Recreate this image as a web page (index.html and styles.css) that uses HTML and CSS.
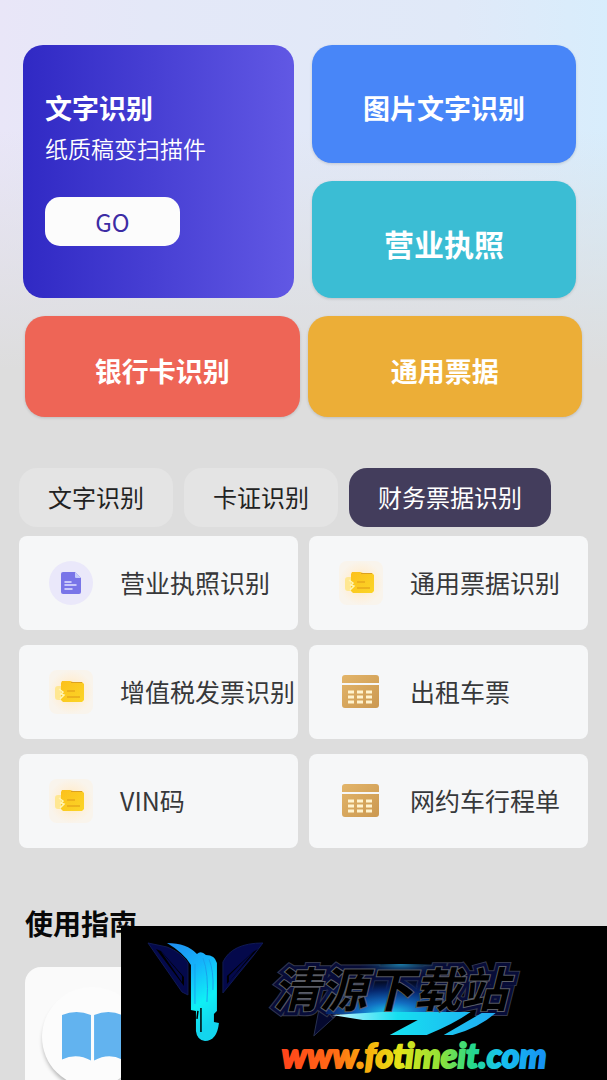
FILE: index.html
```html
<!DOCTYPE html>
<html lang="zh-CN">
<head>
<meta charset="utf-8">
<meta name="viewport" content="width=device-width, initial-scale=1">
<title>文字识别</title>
<link rel="stylesheet" href="styles.css">
</head>
<body>
<svg class="defs" aria-hidden="true">
  <defs>
    <linearGradient id="gold" x1="0" y1="0" x2="1" y2="1"><stop offset="0" stop-color="#e3b56a"/><stop offset="1" stop-color="#cb9850"/></linearGradient>
    <linearGradient id="yellow" x1="0" y1="0" x2="1" y2="1"><stop offset="0" stop-color="#fcc01c"/><stop offset="1" stop-color="#fbd526"/></linearGradient>
    <radialGradient id="halo"><stop offset="0" stop-color="#ffe7b4"/><stop offset="0.65" stop-color="#fdf0dc"/><stop offset="1" stop-color="#f9f4ec"/></radialGradient>
    <symbol id="ticket" viewBox="0 0 44 44">
      <rect width="44" height="44" rx="8" fill="url(#halo)"/>
      <rect x="6" y="16" width="12" height="14" rx="3" fill="#ffe792"/>
      <path d="M13 11h8l3 1h9l2 2v16l-2 2H14l-2-2V13z" fill="url(#yellow)"/>
      <path d="M22 12h11v1H22z" fill="#dca11f"/>
      <path d="M18 21h8M18 27h13" stroke="#e8a91b" stroke-width="1.5"/>
      <path d="M10 19l4 3-2 2 3 1-4 4" fill="none" stroke="#fff5b4" stroke-width="1.5"/>
    </symbol>
    <symbol id="calendar" viewBox="0 0 44 44">
      <path d="M6 5h31a3 3 0 0 1 3 3v5H3V8a3 3 0 0 1 3-3zM3 15h37v20a3 3 0 0 1-3 3H6a3 3 0 0 1-3-3z" fill="url(#gold)"/>
      <path d="M9 22h6m3 0h6m3 0h6M9 27h6m3 0h6m3 0h6M9 32h6m3 0h6m3 0h6" stroke="#fff3ce" stroke-width="3"/>
    </symbol>
    <symbol id="document" viewBox="0 0 44 44">
      <circle cx="22" cy="22" r="22" fill="#eae8fa"/>
      <path d="M14 11h12l6 6v14a2 2 0 0 1-2 2H14a2 2 0 0 1-2-2V13a2 2 0 0 1 2-2z" fill="#7975e8"/>
      <path d="M26 11l6 6h-5a1 1 0 0 1-1-1z" fill="#c6cdfb"/>
      <path d="M16 21h6M16 24h11M16 28h7" stroke="#e4e4ff" stroke-width="1.5" stroke-linecap="round"/>
    </symbol>
  </defs>
</svg>
<div class="page">
  <section class="hero">
    <article class="scan">
      <h2 class="scan-title">文字识别</h2>
      <p class="scan-text">纸质稿变扫描件</p>
      <button class="go" type="button">GO</button>
    </article>
    <div class="hero-side">
      <button class="tile blue" type="button">图片文字识别</button>
      <button class="tile teal" type="button">营业执照</button>
    </div>
  </section>
  <section class="pair">
    <button class="tile red" type="button">银行卡识别</button>
    <button class="tile amber" type="button">通用票据</button>
  </section>
  <nav class="tabs">
    <button class="tab" type="button">文字识别</button>
    <button class="tab" type="button">卡证识别</button>
    <button class="tab active" type="button">财务票据识别</button>
  </nav>
  <section class="services">
    <button class="service" type="button"><svg class="icon"><use href="#document"/></svg><span class="service-name">营业执照识别</span></button>
    <button class="service" type="button"><svg class="icon"><use href="#ticket"/></svg><span class="service-name">通用票据识别</span></button>
    <button class="service" type="button"><svg class="icon"><use href="#ticket"/></svg><span class="service-name">增值税发票识别</span></button>
    <button class="service" type="button"><svg class="icon"><use href="#calendar"/></svg><span class="service-name">出租车票</span></button>
    <button class="service" type="button"><svg class="icon"><use href="#ticket"/></svg><span class="service-name">VIN码</span></button>
    <button class="service" type="button"><svg class="icon"><use href="#calendar"/></svg><span class="service-name">网约车行程单</span></button>
  </section>
  <section class="guide">
    <h2 class="guide-title">使用指南</h2>
    <div class="guide-card">
      <div class="guide-badge">
        <svg class="book" viewBox="0 0 58 48"><path d="M0 3q14-6 28 0v44q-14-8-28-1zM31 3q14-6 27 0v43q-13-7-27 1z" fill="#62b3ef"/></svg>
      </div>
    </div>
  </section>
</div>
<aside class="watermark">
  <svg class="brand" viewBox="0 0 486 154" role="img" aria-label="清源下载站 www.fotimeit.com">
    <defs>
      <linearGradient id="brush" x1="0" y1="0" x2="0.4" y2="1"><stop offset="0" stop-color="#208cf0"/><stop offset="0.4" stop-color="#14b4fb"/><stop offset="0.75" stop-color="#0ff0f5"/><stop offset="1" stop-color="#13d5ee"/></linearGradient>
      <linearGradient id="swoosh" x1="0" y1="0" x2="1" y2="0"><stop offset="0" stop-color="#c8f4ff"/><stop offset="0.4" stop-color="#16dff0"/><stop offset="1" stop-color="#20aaf2"/></linearGradient>
      <radialGradient id="glow" cx="0.5" cy="1" r="0.8"><stop offset="0" stop-color="#19d7f2"/><stop offset="0.3" stop-color="#126cc0"/><stop offset="0.6" stop-color="#06276d"/><stop offset="1" stop-color="#070c38" stop-opacity="0"/></radialGradient>
      <radialGradient id="glow-top" cx="0.5" cy="0" r="0.6"><stop offset="0" stop-color="#1b7dab"/><stop offset="1" stop-color="#070c38" stop-opacity="0"/></radialGradient>
      <linearGradient id="rainbow" x1="0" y1="0" x2="1" y2="0"><stop offset="0" stop-color="#ff431b"/><stop offset="0.2" stop-color="#ff6b15"/><stop offset="0.34" stop-color="#f6b60c"/><stop offset="0.44" stop-color="#e4e217"/><stop offset="0.6" stop-color="#90e338"/><stop offset="0.72" stop-color="#25d88b"/><stop offset="0.82" stop-color="#17c5ee"/><stop offset="1" stop-color="#168ef4"/></linearGradient>
    </defs>
    <path d="M27 17l19 4q14 5 21 16v32L61 66zM142 17q-31 0-40 19v31l31-38z" fill="#04094b" stroke="#101a52"/>
    <path d="M35 23l5 2 23 26v9zM137 23l-5 3-26 24v8z" fill="#000"/>
    <path d="M39 24l22 26v6zM134 24l-26 26v6z" fill="#04094b"/>
    <path d="M46 17q20 0 30 11q4-4 9 1q9 0 11 8v48l-3 3v8l5 1q-2 18-14 18q-8-1-9-10v-20l-5-1V39q-7-12-24-22z" fill="url(#brush)"/>
    <path d="M80 82v24M77 85l-1 8" stroke="#000" stroke-width="1.5"/>
    <path d="M82 32q6 15 4 44M88 33q5 12 4 31M74 38v40" fill="none" stroke="#18a2ec"/>
    <path d="M198 84l-5 26 22-20z" fill="#05092f" stroke="#28304e"/>
    <text class="brand-name brand-edge" x="152" y="81">清源下载站</text>
    <text class="brand-name brand-navy" x="152" y="81">清源下载站</text>
    <path d="M205 38h130l-10 50H205z" fill="url(#glow)"/>
    <path d="M240 38h80v24h-80z" fill="url(#glow-top)"/>
    <path d="M211 89l50-3h89q-17 12-44 23h-37l28-15h-55zM361 87h14q-17 15-43 22h-9z" fill="url(#swoosh)"/>
    <text class="brand-name brand-face" x="152" y="81">清源下载站</text>
    <text class="brand-url" x="161" y="142">www.fotimeit.com</text>
  </svg>
</aside>
</body>
</html>
```

FILE: styles.css
```css
* {
  box-sizing: border-box;
}

body {
  margin: 0;
  font-family: "Noto Sans CJK SC", "Noto Sans", sans-serif;
  background: #dddddd;
}

h2, p {
  margin: 0;
}

button {
  border: 0;
  margin: 0;
  padding: 0;
  font-family: inherit;
  cursor: pointer;
}

.defs {
  position: absolute;
  width: 0;
  height: 0;
}

.page {
  display: flex;
  flex-direction: column;
  min-height: 100vh;
  padding: 45px 19px 0;
  background:
    linear-gradient(to bottom, rgba(221, 221, 221, 0) 130px, #dddddd 370px),
    linear-gradient(to right, #e9e6f8 0, #e4e8f8 25%, #e0e9f8 75%, #d8edfc 100%);
}

.hero {
  display: grid;
  grid-template-columns: 271fr 264fr;
  gap: 18px;
  padding: 0 12px 0 4px;
}

.scan {
  display: flex;
  flex-direction: column;
  align-items: flex-start;
  padding: 43px 22px 52px;
  border-radius: 20px;
  color: #ffffff;
  background: linear-gradient(to right, #3029c4, #4840d4 50%, #6158e4);
}

.scan-title {
  font-size: 27px;
  line-height: 40px;
  font-weight: 700;
}

.scan-text {
  margin-top: 3px;
  font-size: 23px;
  line-height: 34px;
  font-weight: 350;
}

.go {
  width: 135px;
  height: 49px;
  margin-top: 32px;
  border-radius: 15px;
  font-size: 24px;
  color: #3c2ca4;
  background: #fcfcfc;
}

.hero-side {
  display: grid;
  grid-template-rows: 1fr 1fr;
  gap: 18px;
}

.tile {
  border-radius: 20px;
  padding-top: 8px;
  font-size: 27px;
  font-weight: 700;
  color: #ffffff;
  box-shadow: 0 1px 3px rgba(0, 0, 0, 0.15);
}

.blue {
  background: #4886f8;
}

.teal {
  font-size: 30px;
  background: #3bbdd4;
}

.red {
  background: #ee6556;
}

.amber {
  background: #ecae37;
}

.pair {
  display: grid;
  grid-template-columns: 1fr 1fr;
  gap: 8px;
  height: 101px;
  margin-top: 18px;
  padding: 0 6px;
}

.tabs {
  display: flex;
  gap: 11px;
  margin-top: 51px;
}

.tab {
  height: 59px;
  padding: 0 29px 2px;
  border-radius: 18px;
  font-size: 24px;
  white-space: nowrap;
  color: #222222;
  background: #e4e4e4;
}

.active {
  color: #ffffff;
  background: #433d5c;
}

.services {
  display: grid;
  grid-template-columns: 1fr 1fr;
  grid-auto-rows: 94px;
  gap: 15px 11px;
  margin-top: 9px;
}

.service {
  display: flex;
  align-items: center;
  gap: 27px;
  min-width: 0;
  padding-left: 30px;
  border-radius: 8px;
  font-size: 25px;
  white-space: nowrap;
  color: #37383a;
  background: #f6f7f8;
}

.service-name {
  padding-bottom: 2px;
}

.icon {
  flex: none;
  width: 44px;
  height: 44px;
}

.guide {
  display: flex;
  flex: 1;
  flex-direction: column;
  margin-top: 54px;
  padding: 0 6px;
}

.guide-title {
  font-size: 28px;
  line-height: 42px;
  font-weight: 700;
  color: #080808;
}

.guide-card {
  flex: 1;
  margin-top: 23px;
  padding: 20px 17px 0;
  border-radius: 16px 16px 0 0;
  overflow: hidden;
  background: #fafafa;
}

.guide-badge {
  display: flex;
  align-items: center;
  justify-content: center;
  width: 100px;
  height: 100px;
  margin-bottom: -8px;
  border-radius: 50%;
  background: #fcfcfc;
  box-shadow: -1px 4px 4px -2px rgba(0, 0, 0, 0.3);
}

.book {
  width: 60px;
}

.watermark {
  position: fixed;
  right: 0;
  bottom: 0;
  width: 80%;
  background: #000000;
}

.brand {
  display: block;
  width: 100%;
}

.brand-name {
  font-family: "Noto Sans CJK SC", sans-serif;
  font-size: 47px;
  font-weight: 700;
  font-style: italic;
}

.brand-edge {
  fill: #34384d;
  stroke: #34384d;
  stroke-width: 10px;
}

.brand-navy {
  fill: #070c38;
  stroke: #070c38;
  stroke-width: 8px;
}

.brand-face {
  fill: #000000;
  stroke: #5a5d66;
  stroke-width: 2px;
  paint-order: stroke;
}

.brand-url {
  font-family: Lato, sans-serif;
  font-size: 34px;
  font-weight: 900;
  font-style: italic;
  fill: url(#rainbow);
  stroke: url(#rainbow);
  stroke-width: 2px;
}
```
